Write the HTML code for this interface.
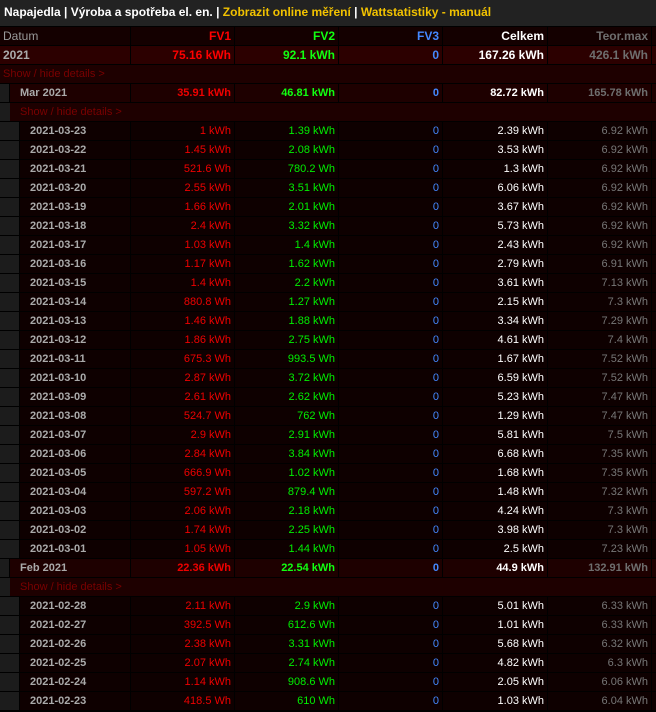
<!DOCTYPE html>
<html><head><meta charset="utf-8"><style>
*{margin:0;padding:0;box-sizing:border-box}
body{width:656px;height:712px;background:#000;font-family:"Liberation Sans",Arial,sans-serif;overflow:hidden}
.top{height:26px;background:#222;color:#fff;font-weight:bold;font-size:12px;line-height:25px;padding-left:4px}
.top span{color:#f2c200}
.r{display:flex;height:18px;margin-top:1px;font-size:11px;line-height:18px}
.r>div{border-right:1px solid #000;text-align:right;padding-right:3px;white-space:nowrap;overflow:hidden}
.r>.d{text-align:left;padding-left:5px;color:#aaa;font-weight:bold}
.r>.i{background:#1c1c1c;padding:0}
.c1{width:104px}.c2{width:104px}.c3{width:104px}.c4{width:105px}.c5{width:104px}
.h{background:#140000;font-size:12px;font-weight:bold}
.h .d{font-weight:normal;color:#999}
.y{background:#2c0000;font-size:12px;font-weight:bold}
.m{background:#1e0000;font-weight:bold}
.s{background:#1e0000;color:#7a0000;font-size:11px}
.s>div{border:0;text-align:left}
.dd{background:#0e0000}
.R{color:#f00}.G{color:#1f1}.B{color:#48f}.W{color:#fff}.T{color:#6e6e6e}
.dd .R{color:#e00}.dd .G{color:#0e0}.dd .T{color:#777}
.m .R{color:#e00}
</style></head><body>
<div class="top">Napajedla | Výroba a spotřeba el. en. | <span>Zobrazit online měření</span> | <span>Wattstatistiky - manuál</span></div>
<div class="r h"><div class="d" style="width:131px;padding-left:3px">Datum</div><div class="c1 R">FV1</div><div class="c2 G">FV2</div><div class="c3 B">FV3</div><div class="c4 W">Celkem</div><div class="c5 T">Teor.max</div></div>
<div class="r y"><div class="d" style="width:131px;padding-left:3px">2021</div><div class="c1 R">75.16 kWh</div><div class="c2 G">92.1 kWh</div><div class="c3 B">0</div><div class="c4 W">167.26 kWh</div><div class="c5 T">426.1 kWh</div></div>
<div class="r s"><div style="width:651px;padding-left:3px">Show / hide details &gt;</div></div>
<div class="r m"><div class="i" style="width:10px"></div><div class="d" style="width:121px;padding-left:10px">Mar 2021</div><div class="c1 R">35.91 kWh</div><div class="c2 G">46.81 kWh</div><div class="c3 B">0</div><div class="c4 W">82.72 kWh</div><div class="c5 T">165.78 kWh</div></div>
<div class="r s"><div class="i" style="width:10px;border-right:0"></div><div style="width:641px;padding-left:10px">Show / hide details &gt;</div></div>
<div class="r dd"><div class="i" style="width:20px"></div><div class="d" style="width:111px;padding-left:10px">2021-03-23</div><div class="c1 R">1 kWh</div><div class="c2 G">1.39 kWh</div><div class="c3 B">0</div><div class="c4 W">2.39 kWh</div><div class="c5 T">6.92 kWh</div></div>
<div class="r dd"><div class="i" style="width:20px"></div><div class="d" style="width:111px;padding-left:10px">2021-03-22</div><div class="c1 R">1.45 kWh</div><div class="c2 G">2.08 kWh</div><div class="c3 B">0</div><div class="c4 W">3.53 kWh</div><div class="c5 T">6.92 kWh</div></div>
<div class="r dd"><div class="i" style="width:20px"></div><div class="d" style="width:111px;padding-left:10px">2021-03-21</div><div class="c1 R">521.6 Wh</div><div class="c2 G">780.2 Wh</div><div class="c3 B">0</div><div class="c4 W">1.3 kWh</div><div class="c5 T">6.92 kWh</div></div>
<div class="r dd"><div class="i" style="width:20px"></div><div class="d" style="width:111px;padding-left:10px">2021-03-20</div><div class="c1 R">2.55 kWh</div><div class="c2 G">3.51 kWh</div><div class="c3 B">0</div><div class="c4 W">6.06 kWh</div><div class="c5 T">6.92 kWh</div></div>
<div class="r dd"><div class="i" style="width:20px"></div><div class="d" style="width:111px;padding-left:10px">2021-03-19</div><div class="c1 R">1.66 kWh</div><div class="c2 G">2.01 kWh</div><div class="c3 B">0</div><div class="c4 W">3.67 kWh</div><div class="c5 T">6.92 kWh</div></div>
<div class="r dd"><div class="i" style="width:20px"></div><div class="d" style="width:111px;padding-left:10px">2021-03-18</div><div class="c1 R">2.4 kWh</div><div class="c2 G">3.32 kWh</div><div class="c3 B">0</div><div class="c4 W">5.73 kWh</div><div class="c5 T">6.92 kWh</div></div>
<div class="r dd"><div class="i" style="width:20px"></div><div class="d" style="width:111px;padding-left:10px">2021-03-17</div><div class="c1 R">1.03 kWh</div><div class="c2 G">1.4 kWh</div><div class="c3 B">0</div><div class="c4 W">2.43 kWh</div><div class="c5 T">6.92 kWh</div></div>
<div class="r dd"><div class="i" style="width:20px"></div><div class="d" style="width:111px;padding-left:10px">2021-03-16</div><div class="c1 R">1.17 kWh</div><div class="c2 G">1.62 kWh</div><div class="c3 B">0</div><div class="c4 W">2.79 kWh</div><div class="c5 T">6.91 kWh</div></div>
<div class="r dd"><div class="i" style="width:20px"></div><div class="d" style="width:111px;padding-left:10px">2021-03-15</div><div class="c1 R">1.4 kWh</div><div class="c2 G">2.2 kWh</div><div class="c3 B">0</div><div class="c4 W">3.61 kWh</div><div class="c5 T">7.13 kWh</div></div>
<div class="r dd"><div class="i" style="width:20px"></div><div class="d" style="width:111px;padding-left:10px">2021-03-14</div><div class="c1 R">880.8 Wh</div><div class="c2 G">1.27 kWh</div><div class="c3 B">0</div><div class="c4 W">2.15 kWh</div><div class="c5 T">7.3 kWh</div></div>
<div class="r dd"><div class="i" style="width:20px"></div><div class="d" style="width:111px;padding-left:10px">2021-03-13</div><div class="c1 R">1.46 kWh</div><div class="c2 G">1.88 kWh</div><div class="c3 B">0</div><div class="c4 W">3.34 kWh</div><div class="c5 T">7.29 kWh</div></div>
<div class="r dd"><div class="i" style="width:20px"></div><div class="d" style="width:111px;padding-left:10px">2021-03-12</div><div class="c1 R">1.86 kWh</div><div class="c2 G">2.75 kWh</div><div class="c3 B">0</div><div class="c4 W">4.61 kWh</div><div class="c5 T">7.4 kWh</div></div>
<div class="r dd"><div class="i" style="width:20px"></div><div class="d" style="width:111px;padding-left:10px">2021-03-11</div><div class="c1 R">675.3 Wh</div><div class="c2 G">993.5 Wh</div><div class="c3 B">0</div><div class="c4 W">1.67 kWh</div><div class="c5 T">7.52 kWh</div></div>
<div class="r dd"><div class="i" style="width:20px"></div><div class="d" style="width:111px;padding-left:10px">2021-03-10</div><div class="c1 R">2.87 kWh</div><div class="c2 G">3.72 kWh</div><div class="c3 B">0</div><div class="c4 W">6.59 kWh</div><div class="c5 T">7.52 kWh</div></div>
<div class="r dd"><div class="i" style="width:20px"></div><div class="d" style="width:111px;padding-left:10px">2021-03-09</div><div class="c1 R">2.61 kWh</div><div class="c2 G">2.62 kWh</div><div class="c3 B">0</div><div class="c4 W">5.23 kWh</div><div class="c5 T">7.47 kWh</div></div>
<div class="r dd"><div class="i" style="width:20px"></div><div class="d" style="width:111px;padding-left:10px">2021-03-08</div><div class="c1 R">524.7 Wh</div><div class="c2 G">762 Wh</div><div class="c3 B">0</div><div class="c4 W">1.29 kWh</div><div class="c5 T">7.47 kWh</div></div>
<div class="r dd"><div class="i" style="width:20px"></div><div class="d" style="width:111px;padding-left:10px">2021-03-07</div><div class="c1 R">2.9 kWh</div><div class="c2 G">2.91 kWh</div><div class="c3 B">0</div><div class="c4 W">5.81 kWh</div><div class="c5 T">7.5 kWh</div></div>
<div class="r dd"><div class="i" style="width:20px"></div><div class="d" style="width:111px;padding-left:10px">2021-03-06</div><div class="c1 R">2.84 kWh</div><div class="c2 G">3.84 kWh</div><div class="c3 B">0</div><div class="c4 W">6.68 kWh</div><div class="c5 T">7.35 kWh</div></div>
<div class="r dd"><div class="i" style="width:20px"></div><div class="d" style="width:111px;padding-left:10px">2021-03-05</div><div class="c1 R">666.9 Wh</div><div class="c2 G">1.02 kWh</div><div class="c3 B">0</div><div class="c4 W">1.68 kWh</div><div class="c5 T">7.35 kWh</div></div>
<div class="r dd"><div class="i" style="width:20px"></div><div class="d" style="width:111px;padding-left:10px">2021-03-04</div><div class="c1 R">597.2 Wh</div><div class="c2 G">879.4 Wh</div><div class="c3 B">0</div><div class="c4 W">1.48 kWh</div><div class="c5 T">7.32 kWh</div></div>
<div class="r dd"><div class="i" style="width:20px"></div><div class="d" style="width:111px;padding-left:10px">2021-03-03</div><div class="c1 R">2.06 kWh</div><div class="c2 G">2.18 kWh</div><div class="c3 B">0</div><div class="c4 W">4.24 kWh</div><div class="c5 T">7.3 kWh</div></div>
<div class="r dd"><div class="i" style="width:20px"></div><div class="d" style="width:111px;padding-left:10px">2021-03-02</div><div class="c1 R">1.74 kWh</div><div class="c2 G">2.25 kWh</div><div class="c3 B">0</div><div class="c4 W">3.98 kWh</div><div class="c5 T">7.3 kWh</div></div>
<div class="r dd"><div class="i" style="width:20px"></div><div class="d" style="width:111px;padding-left:10px">2021-03-01</div><div class="c1 R">1.05 kWh</div><div class="c2 G">1.44 kWh</div><div class="c3 B">0</div><div class="c4 W">2.5 kWh</div><div class="c5 T">7.23 kWh</div></div>
<div class="r m"><div class="i" style="width:10px"></div><div class="d" style="width:121px;padding-left:10px">Feb 2021</div><div class="c1 R">22.36 kWh</div><div class="c2 G">22.54 kWh</div><div class="c3 B">0</div><div class="c4 W">44.9 kWh</div><div class="c5 T">132.91 kWh</div></div>
<div class="r s"><div class="i" style="width:10px;border-right:0"></div><div style="width:641px;padding-left:10px">Show / hide details &gt;</div></div>
<div class="r dd"><div class="i" style="width:20px"></div><div class="d" style="width:111px;padding-left:10px">2021-02-28</div><div class="c1 R">2.11 kWh</div><div class="c2 G">2.9 kWh</div><div class="c3 B">0</div><div class="c4 W">5.01 kWh</div><div class="c5 T">6.33 kWh</div></div>
<div class="r dd"><div class="i" style="width:20px"></div><div class="d" style="width:111px;padding-left:10px">2021-02-27</div><div class="c1 R">392.5 Wh</div><div class="c2 G">612.6 Wh</div><div class="c3 B">0</div><div class="c4 W">1.01 kWh</div><div class="c5 T">6.33 kWh</div></div>
<div class="r dd"><div class="i" style="width:20px"></div><div class="d" style="width:111px;padding-left:10px">2021-02-26</div><div class="c1 R">2.38 kWh</div><div class="c2 G">3.31 kWh</div><div class="c3 B">0</div><div class="c4 W">5.68 kWh</div><div class="c5 T">6.32 kWh</div></div>
<div class="r dd"><div class="i" style="width:20px"></div><div class="d" style="width:111px;padding-left:10px">2021-02-25</div><div class="c1 R">2.07 kWh</div><div class="c2 G">2.74 kWh</div><div class="c3 B">0</div><div class="c4 W">4.82 kWh</div><div class="c5 T">6.3 kWh</div></div>
<div class="r dd"><div class="i" style="width:20px"></div><div class="d" style="width:111px;padding-left:10px">2021-02-24</div><div class="c1 R">1.14 kWh</div><div class="c2 G">908.6 Wh</div><div class="c3 B">0</div><div class="c4 W">2.05 kWh</div><div class="c5 T">6.06 kWh</div></div>
<div class="r dd"><div class="i" style="width:20px"></div><div class="d" style="width:111px;padding-left:10px">2021-02-23</div><div class="c1 R">418.5 Wh</div><div class="c2 G">610 Wh</div><div class="c3 B">0</div><div class="c4 W">1.03 kWh</div><div class="c5 T">6.04 kWh</div></div>
</body></html>
